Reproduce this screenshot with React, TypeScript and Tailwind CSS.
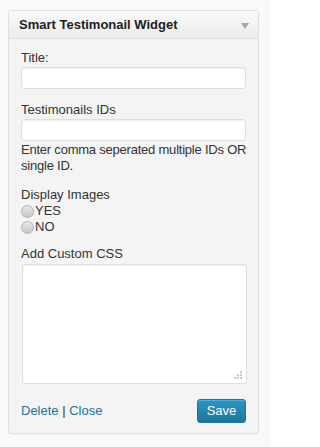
import { ReactNode } from "react";

const font = { fontFamily: '"Liberation Sans", Arial, sans-serif' };

function Label({ children, className = "" }: { children: ReactNode; className?: string }) {
  return <p className={`text-[13px] leading-[16px] text-[#333] ${className}`}>{children}</p>;
}

function TextInput({ className = "" }: { className?: string }) {
  return (
    <div
      className={`h-[22px] w-[225px] rounded-[3px] border border-[#dfdfdf] bg-white shadow-[inset_0_1px_2px_rgba(0,0,0,0.07)] ${className}`}
    />
  );
}

function Radio({ label }: { label: string }) {
  return (
    <label className="flex h-[16px] items-center text-[13px] leading-[16px] text-[#333]">
      <span className="mr-[1px] h-[13px] w-[13px] rounded-full border border-[#b4b4b4] bg-gradient-to-b from-[#e8e8e8] to-[#c6c6c6]" />
      {label}
    </label>
  );
}

export default function App() {
  return (
    <div style={font} className="h-[447px] w-[271px] bg-[#f9f9f9] pl-[8px] pt-[10px]">
      <div className="w-[251px] rounded-[3px] border border-[#dfdfdf] bg-[#f4f4f4] shadow-[0_1px_1px_rgba(0,0,0,0.04)]">
        {/* widget header */}
        <div className="flex h-[28px] items-center justify-between border-b border-[#dfdfdf] bg-gradient-to-b from-[#f9f9f9] to-[#ececec] pl-[10px] pr-[9px]">
          <h3 className="text-[13px] font-bold text-[#222]">Smart Testimonail Widget</h3>
          <svg width="8" height="6" viewBox="0 0 8 6" className="mt-[2px]">
            <polygon points="0,0 8,0 4,6" fill="#a6a6a6" />
          </svg>
        </div>

        <div className="px-[12px] pb-[10px] pt-[11px]">
          <Label>Title:</Label>
          <TextInput className="mt-[1px]" />

          <Label className="mt-[13px]">Testimonails IDs</Label>
          <TextInput className="mt-[1px]" />
          <Label className="mt-[1px] whitespace-nowrap tracking-[-0.22px]">
            Enter comma seperated multiple IDs OR
            <br />
            single ID.
          </Label>

          <Label className="mt-[13px]">Display Images</Label>
          <Radio label="YES" />
          <Radio label="NO" />

          <Label className="mt-[11px]">Add Custom CSS</Label>
          <div className="relative ml-[1px] mt-[2px] h-[120px] w-[225px] rounded-[3px] border border-[#dfdfdf] bg-white shadow-[inset_0_1px_2px_rgba(0,0,0,0.07)]">
            <svg width="10" height="10" viewBox="0 0 10 10" className="absolute bottom-[3px] right-[3px]">
              <rect x="7" y="1" width="2" height="2" fill="#c8c8c8" />
              <rect x="4" y="4" width="2" height="2" fill="#c8c8c8" />
              <rect x="7" y="4" width="2" height="2" fill="#c8c8c8" />
              <rect x="1" y="7" width="2" height="2" fill="#c8c8c8" />
              <rect x="4" y="7" width="2" height="2" fill="#c8c8c8" />
              <rect x="7" y="7" width="2" height="2" fill="#c8c8c8" />
            </svg>
          </div>

          <div className="mt-[15px] flex items-center justify-between">
            <p className="text-[13px] text-[#333]">
              <a className="text-[#21759b]">Delete</a> | <a className="text-[#21759b]">Close</a>
            </p>
            <button className="h-[24px] w-[49px] rounded-[3px] border border-[#21759b] bg-gradient-to-b from-[#2a95c5] to-[#21759b] text-[13px] text-white shadow-[inset_0_1px_0_rgba(120,200,230,0.5)]">
              Save
            </button>
          </div>
        </div>
      </div>
    </div>
  );
}
